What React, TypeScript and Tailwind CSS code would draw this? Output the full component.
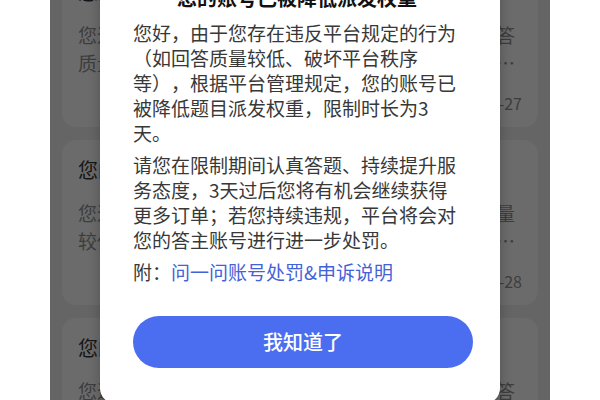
import React from "react";

const cards = [
  {
    title: "您的账号违规处罚通知",
    text: "您近期回复的问题因存在违规行为被判定为低质回答质量较低，平台已对您的账号进行降权处理，请您认真答题，持续提升服务质量",
    date: "2023-03-27",
  },
  {
    title: "您的账号违规处罚通知",
    text: "您近期的回答因存在违规行为被平台判定为回答质量较低，平台已对您的账号进行降权处理，请您认真答题，持续提升服务质量",
    date: "2023-03-28",
  },
  {
    title: "您的账号违规处罚通知",
    text: "您近期回复的问题因存在违规行为被判定为低质回答质量较低，平台已对您的账号进行降权处理，请您认真答题，持续提升服务质量",
    date: "2023-03-29",
  },
];

export default function App() {
  return (
    <div
      className="relative w-[600px] h-[400px] overflow-hidden bg-white flex justify-center [text-spacing-trim:space-all]"
      style={{ fontFamily: '"Noto Sans CJK SC", "Noto Sans", sans-serif' }}
    >
      <div className="w-[500px] h-full bg-[#656565] px-[12px] overflow-hidden">
        <div className="flex flex-col gap-[13px] -mt-[38px]">
          {cards.map((c, i) => (
            <div key={i} className="shrink-0 h-[165px] rounded-[14px] bg-[#6b6b6b] px-[16px] pt-[16px]">
              <div className="h-[28px] leading-[28px] text-[20px] text-[#161616] whitespace-nowrap overflow-hidden">
                {c.title}
              </div>
              <p className="mt-[15px] text-[19px] leading-[28px] text-[#3d3d3d] line-clamp-2">{c.text}</p>
              <div className="mt-[12px] h-[28px] leading-[28px] text-[16px] text-[#3d3d3d] text-right">{c.date}</div>
            </div>
          ))}
        </div>
      </div>

      <div className="absolute left-[100px] top-[-40px] w-[400px] h-[444px] bg-white rounded-[16px] pl-[33px] pr-[27px] pt-[24px] shadow-[0_4px_12px_rgba(0,0,0,0.25)]">
        <div className="pr-[12px]">
          <div className="h-[28px] leading-[28px] text-[20px] font-bold text-[#111] text-center whitespace-nowrap">
            您的账号已被降低派发权重
          </div>
          <p className="mt-[8px] text-[19px] leading-[25px] text-[#383838]">
            您好，由于您存在违反平台规定的行为（如回答质量较低、破坏平台秩序等），根据平台管理规定，您的账号已被降低题目派发权重，限制时长为3天。
          </p>
          <p className="mt-[7px] text-[19px] leading-[25px] text-[#383838]">
            请您在限制期间认真答题、持续提升服务态度，3天过后您将有机会继续获得更多订单；若您持续违规，平台将会对您的答主账号进行进一步处罚。
          </p>
          <p className="mt-[7px] text-[19px] leading-[25px] text-[#383838]">
            附：<span className="text-[#4462d8]">问一问账号处罚&amp;申诉说明</span>
          </p>
        </div>
        <button className="mt-[32px] w-full h-[52px] rounded-full bg-[#4b6ef0] text-white text-[20px] font-medium">
          我知道了
        </button>
      </div>
    </div>
  );
}
